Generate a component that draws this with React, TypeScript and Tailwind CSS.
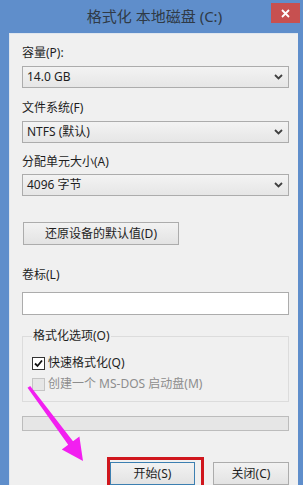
import React from "react";

const font = { fontFamily: '"Noto Sans", "Noto Sans CJK SC", sans-serif' };

function Chevron() {
  return (
    <svg width="9" height="6" viewBox="0 0 9 6" className="shrink-0">
      <path d="M1 1 L4.5 4.5 L8 1" fill="none" stroke="#404040" strokeWidth="1.8" />
    </svg>
  );
}

function Select({ value }: { value: string }) {
  return (
    <div className="h-[22px] w-[267px] border border-[#acacac] bg-gradient-to-b from-[#f3f3f3] to-[#e6e6e6] flex items-center justify-between pl-[4px] pr-[5px] text-[12px] leading-4 text-[#1e1e1e]">
      <span>{value}</span>
      <Chevron />
    </div>
  );
}

function Label({ children, className = "" }: { children: React.ReactNode; className?: string }) {
  return <div className={`text-[12px] leading-4 text-[#1e1e1e] ${className}`}>{children}</div>;
}

export default function App() {
  return (
    <div className="relative w-[306px] h-[485px] bg-white overflow-hidden" style={font}>
      <div className="w-[303px] h-[485px] bg-[#5f8ecb] flex flex-col">
        {/* title bar */}
        <div className="relative h-[33px] shrink-0 flex items-center justify-center">
          <span className="text-[15px] leading-5 text-[#2f3a46] ml-[6px] mt-[-1px]">格式化 本地磁盘 (C:)</span>
          <div className="absolute right-[3px] top-[3px] w-[29px] h-[20px] bg-[#c75050] flex items-center justify-center">
            <svg width="9" height="9" viewBox="0 0 9 9">
              <path d="M1 1 L8 8 M8 1 L1 8" stroke="white" strokeWidth="1.8" />
            </svg>
          </div>
        </div>
        {/* content */}
        <div className="flex-1 ml-[9px] mr-[5px] bg-[#f0f0f0] border-l border-t border-[#dfe6ee] flex flex-col pl-[12px] pr-[9px]">
          <Label className="mt-[11px]">容量(P):</Label>
          <div className="mt-[5px]"><Select value="14.0 GB" /></div>
          <Label className="mt-[12px]">文件系统(F)</Label>
          <div className="mt-[5px]"><Select value="NTFS (默认)" /></div>
          <Label className="mt-[11px]">分配单元大小(A)</Label>
          <div className="mt-[4px]"><Select value="4096 字节" /></div>
          <div className="mt-[26px] ml-[1px] w-[156px] h-[23px] border border-[#acacac] bg-gradient-to-b from-[#f2f2f2] to-[#e3e3e3] flex items-center justify-center text-[12px] leading-4 text-[#1e1e1e]">
            还原设备的默认值(D)
          </div>
          <Label className="mt-[22px]">卷标(L)</Label>
          <div className="mt-[9px] w-[267px] h-[23px] border border-[#acacac] bg-white" />
          <fieldset className="mt-[13px] w-[267px] border border-[#dcdcdc] pl-[9px] pb-[9px]">
            <legend className="text-[12px] leading-4 text-[#1e1e1e] px-[1px]">格式化选项(O)</legend>
            <div className="mt-[11px] flex items-center h-4 gap-[3px]">
              <div className="w-[13px] h-[13px] border border-[#333333] bg-white flex items-center justify-center">
                <svg width="11" height="11" viewBox="0 0 11 11">
                  <path d="M2 5.5 L4.5 8 L9 2.5" fill="none" stroke="#111" strokeWidth="1.8" />
                </svg>
              </div>
              <span className="text-[12px] leading-4 text-[#1e1e1e]">快速格式化(Q)</span>
            </div>
            <div className="mt-[5px] flex items-center h-4 gap-[3px]">
              <div className="w-[13px] h-[13px] border border-[#c4c4c4] bg-[#e6e6e6]" />
              <span className="text-[12px] leading-4 text-[#8d8d8d]">创建一个 MS-DOS 启动盘(M)</span>
            </div>
          </fieldset>
          <div className="mt-[14px] w-[267px] h-[15px] border border-[#bcbcbc] bg-[#e6e6e6]" />
          <div className="mt-[31px] w-[267px] flex justify-end gap-[18px]">
            <div className="w-[85px] h-[23px] border border-[#3c7fb1] bg-gradient-to-b from-[#f2f2f2] to-[#e3e3e3] flex items-center justify-center text-[12px] leading-4 text-[#1e1e1e]">
              开始(S)
            </div>
            <div className="w-[76px] h-[23px] border border-[#acacac] bg-gradient-to-b from-[#f2f2f2] to-[#e3e3e3] flex items-center justify-center text-[12px] leading-4 text-[#1e1e1e]">
              关闭(C)
            </div>
          </div>
        </div>
      </div>
      {/* annotation: red box */}
      <div className="absolute left-[107px] top-[457px] w-[97px] h-[34px] border-[3px] border-[#d0161d]" />
      {/* annotation: pink arrow */}
      <svg className="absolute left-0 top-0" width="306" height="485" viewBox="0 0 306 485">
        <polygon
          points="27.5,387.8 30.2,386 73,441.2 79.4,436.5 83,461 61.8,449.5 68.2,444.8"
          fill="#f21ff0"
        />
      </svg>
    </div>
  );
}
